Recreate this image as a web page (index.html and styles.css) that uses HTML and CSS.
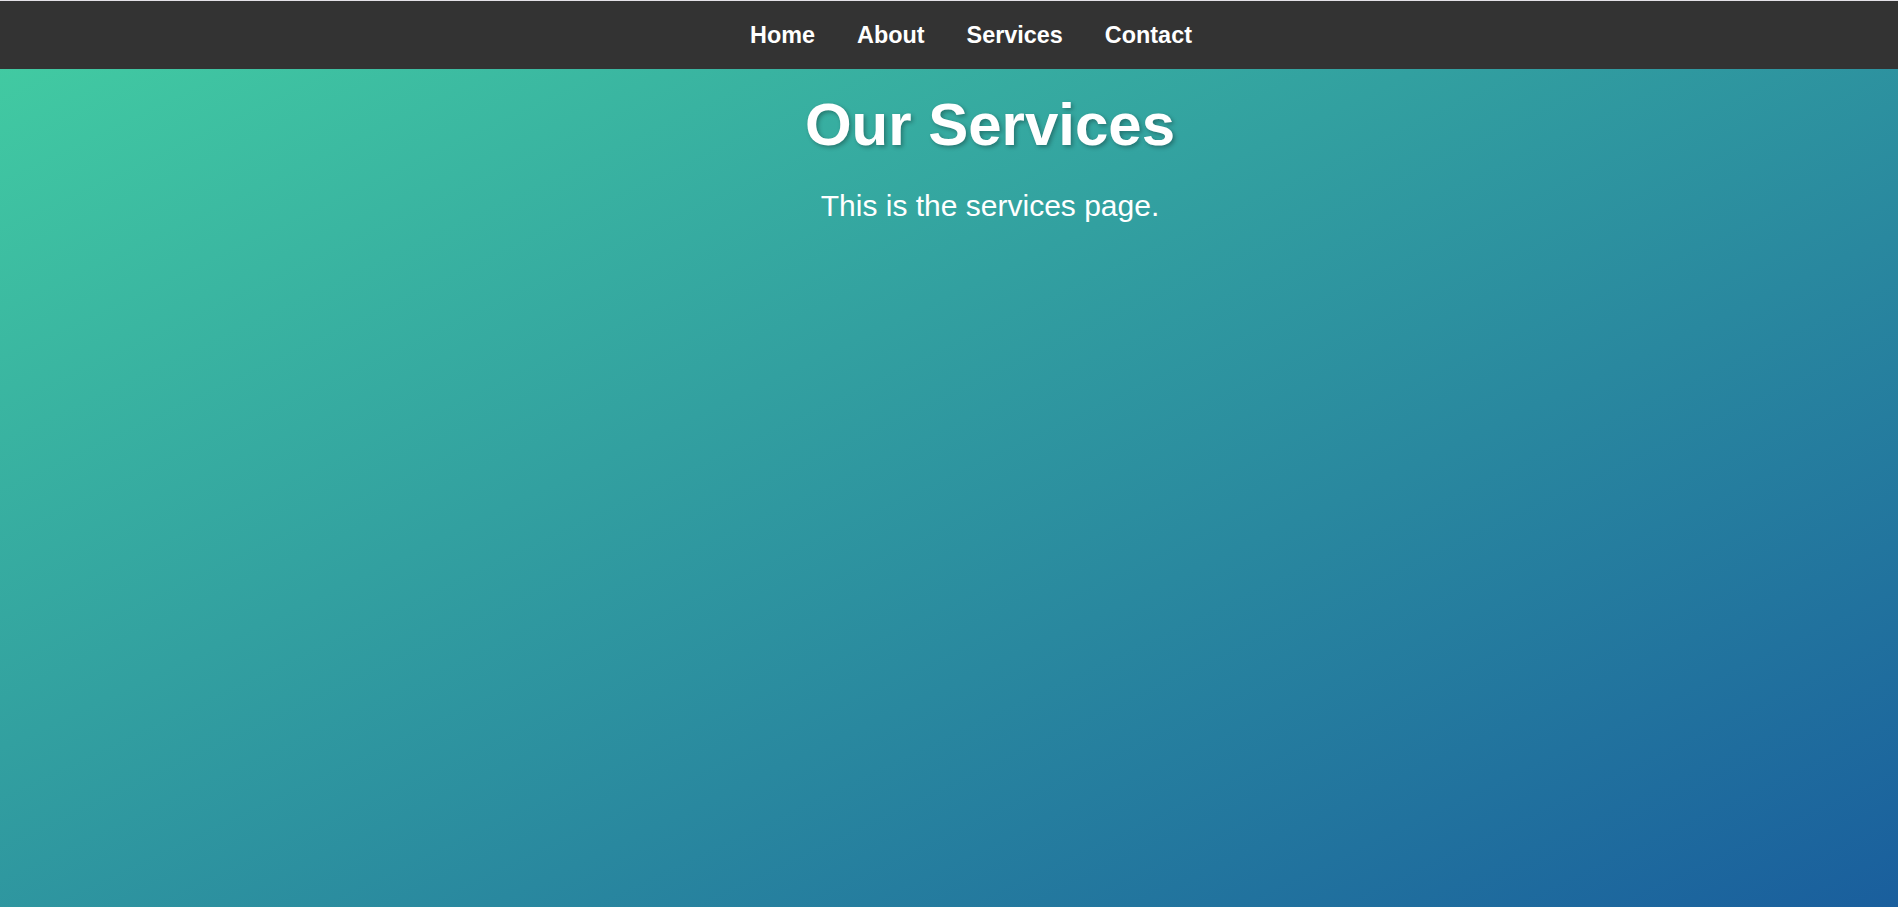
FILE: index.html
```html
<!DOCTYPE html>
<html lang="en">
<head>
<meta charset="utf-8">
<title>Our Services</title>
<link rel="stylesheet" href="styles.css">
</head>
<body>
<nav class="topnav">
  <ul class="nav-list">
    <li><a href="#" class="nav-link">Home</a></li>
    <li><a href="#" class="nav-link">About</a></li>
    <li><a href="#" class="nav-link">Services</a></li>
    <li><a href="#" class="nav-link">Contact</a></li>
  </ul>
</nav>
<main class="content">
  <h1 class="title">Our Services</h1>
  <p class="lead">This is the services page.</p>
</main>
</body>
</html>
```

FILE: styles.css
```css
html, body {
  margin: 0;
  padding: 0;
}
body {
  min-height: 100vh;
  box-sizing: border-box;
  font-family: "Liberation Sans", Arial, sans-serif;
  color: #fff;
  background: linear-gradient(to bottom right, #43cea2 0%, #185a9d 104%);
  border-top: 1px solid #e4e2e8;
}
.topnav {
  background: #333333;
  height: 68px;
  display: flex;
  align-items: center;
}
.nav-list {
  list-style: none;
  margin: 0;
  padding: 0 0 0 44px;
  width: 100%;
  box-sizing: border-box;
  display: flex;
  justify-content: center;
  gap: 42px;
}
.nav-link {
  color: #fff;
  text-decoration: none;
  font-weight: bold;
  font-size: 23.4px;
}
.content {
  text-align: center;
  padding: 21px 0 0 82px;
}
.title {
  margin: 0;
  font-size: 60px;
  font-weight: bold;
  text-shadow: 2px 2px 4px rgba(0, 0, 0, 0.3);
}
.lead {
  margin: 30px 0 0;
  font-size: 30px;
}
```
